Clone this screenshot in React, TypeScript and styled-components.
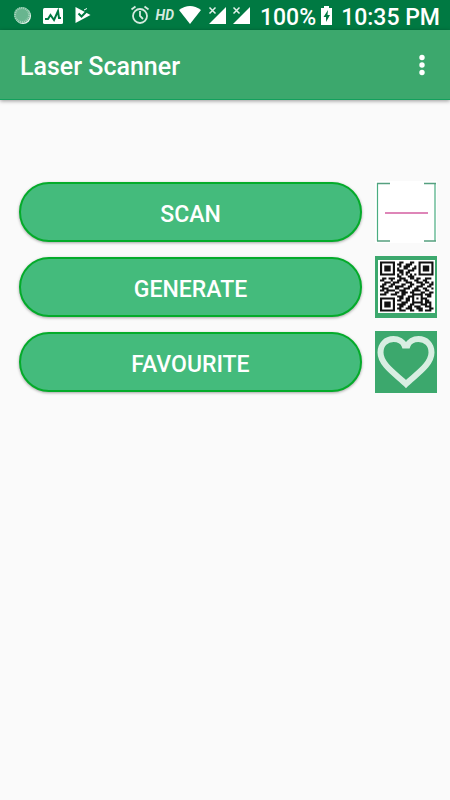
import React from "react";
import styled, { createGlobalStyle } from "styled-components";

const GlobalStyle = createGlobalStyle`
  *, *::before, *::after { box-sizing: border-box; }
  body {
    margin: 0;
    background: #fafafa;
    font-family: Roboto, "Liberation Sans", sans-serif;
    color: #ffffff;
  }
`;

const Screen = styled.div`
  display: flex;
  flex-direction: column;
  min-height: 100vh;
`;

const StatusBar = styled.div`
  display: flex;
  align-items: center;
  justify-content: space-between;
  height: 30px;
  padding: 0 10px 0 12px;
  background: #007942;
`;

const StatusGroup = styled.div<{ $gap: number }>`
  display: flex;
  align-items: center;
  gap: ${(p) => p.$gap}px;
`;

const StatusText = styled.span`
  font-size: 23px;
  line-height: 24px;
  font-weight: 500;
  padding-top: 5px;
  white-space: nowrap;
`;

const Reading = styled(StatusText)`
  margin-left: 4px;
`;

const HdMark = styled.span`
  font-size: 14px;
  line-height: 20px;
  font-weight: 700;
  font-style: italic;
  color: #d5eadf;
`;

const StatusIcon = styled.svg`
  display: block;
  flex: none;
`;

const AppBar = styled.header`
  display: flex;
  align-items: center;
  justify-content: space-between;
  height: 70px;
  padding: 0 16px 0 20px;
  background: #3ca86d;
  border-bottom: 1px solid #12a05c;
  box-shadow: 0 1px 4px rgba(0, 0, 0, 0.4);
`;

const Title = styled.h1`
  margin: 0;
  padding-top: 4px;
  font-size: 25px;
  line-height: 32px;
  font-weight: 500;
`;

const MenuButton = styled.button`
  display: flex;
  align-items: center;
  justify-content: center;
  width: 24px;
  height: 40px;
  padding: 0;
  border: 0;
  background: none;
  color: inherit;
  cursor: pointer;
`;

const Actions = styled.main`
  display: flex;
  flex-direction: column;
  gap: 13px;
  padding: 81px 13px 24px 19px;
`;

const ActionRow = styled.div`
  display: flex;
  align-items: center;
  gap: 13px;
`;

const ActionButton = styled.button`
  flex: 1;
  height: 60px;
  padding: 5px 0 0;
  border: 2px solid #04ab2a;
  border-radius: 30px;
  background: #44bb7c;
  box-shadow: 0 1px 3px rgba(0, 0, 0, 0.35);
  color: #ffffff;
  font-family: inherit;
  font-size: 23px;
  line-height: 28px;
  font-weight: 500;
  text-transform: uppercase;
  cursor: pointer;
`;

const Picture = styled.svg`
  display: block;
  flex: none;
  width: 62px;
  height: 62px;
`;

const QR_ROWS = [
  "1111111001100011001111111",
  "1000001011001110001000001",
  "1011101001011100101011101",
  "1011101010011001101011101",
  "1011101011100111001011101",
  "1000001001101100001000001",
  "1111111010101010101111111",
  "0000000011000111000000000",
  "0110111001110011011001110",
  "1100010011011000110011000",
  "0011101110001110011101101",
  "0110011000110011000110011",
  "1100110111100110011100110",
  "0111000110011100110011001",
  "1101111001110001111001100",
  "0011000110111011000110011",
  "1110011100110001111101110",
  "0000000011100111000100110",
  "1111111001101101010111000",
  "1000001011001101000101100",
  "1011101000111001111101110",
  "1011101011110011000111010",
  "1011101001100110111001110",
  "1000001011001110011100011",
  "1111111001110011001101110",
];

function qrPath() {
  let d = "";
  QR_ROWS.forEach((row, y) => {
    for (const run of row.matchAll(/1+/g)) {
      d += `M${run.index} ${y}h${run[0].length}v1h-${run[0].length}z`;
    }
  });
  return d;
}

function ScanPicture() {
  return (
    <Picture viewBox="0 0 62 62" aria-hidden="true">
      <rect width="62" height="62" fill="#ffffff" />
      <path d="M2.5 2v58M60 2v58" fill="none" stroke="#49ac80" strokeWidth="1.2" />
      <path d="M2 2.5h13M49 2.5h12M2 60h13M49 60h12" fill="none" stroke="#55a07f" strokeWidth="1.6" />
      <path d="M10 32h43" stroke="#de86b8" strokeWidth="2" />
    </Picture>
  );
}

function QrPicture() {
  return (
    <Picture viewBox="0 0 62 62" aria-hidden="true">
      <rect width="62" height="62" fill="#3ca86d" />
      <rect x="3" y="4" width="57" height="53" fill="#ffffff" />
      <path d={qrPath()} fill="#111111" transform="translate(5 5.5) scale(2.14 2)" />
    </Picture>
  );
}

function HeartPicture() {
  return (
    <Picture viewBox="0 0 62 62" aria-hidden="true">
      <rect width="62" height="62" fill="#3ca86d" />
      <path
        d="M31 53C22 44 5.5 34 5.5 21.5C5.5 13.5 11 8 18.5 8C23.5 8 28 10.500 29.5 14.5H32.5C34 10.5 38.5 8 43.5 8C51 8 56.5 13.5 56.5 21.5C56.5 34 40 44 31 53Z"
        fill="none"
        stroke="#d8eee2"
        strokeWidth="6"
      />
    </Picture>
  );
}

const ACTIONS = [
  { label: "Scan", Art: ScanPicture },
  { label: "Generate", Art: QrPicture },
  { label: "Favourite", Art: HeartPicture },
];

function Signal() {
  return (
    <StatusIcon width="19" height="19" viewBox="0 0 19 19" aria-hidden="true">
      <path d="M18 1v17H1z" fill="#ffffff" />
      <path d="M0 0h9v9H0z" fill="#007942" />
      <path d="M1.5 1.5l6 6M7.5 1.5l-6 6" stroke="#e4f2eb" strokeWidth="1.5" />
    </StatusIcon>
  );
}

export default function App() {
  return (
    <Screen>
      <GlobalStyle />
      <StatusBar>
        <StatusGroup $gap={11}>
          <StatusIcon width="20" height="20" viewBox="0 0 20 20" aria-hidden="true">
            <circle cx="11" cy="11" r="8" fill="#e8f4ee" />
            <circle cx="10" cy="10" r="8" fill="#68b58f" />
            <circle cx="10" cy="10" r="7" fill="none" stroke="#a5d3bb" strokeWidth="2" strokeDasharray="1 1" />
          </StatusIcon>
          <StatusIcon width="20" height="17" viewBox="0 0 20 17" aria-hidden="true">
            <rect y="1" width="20" height="16" rx="1.5" fill="#ffffff" />
            <path d="M2 12h3l2.5-4 3.5 5 4-9 1 7h2" fill="none" stroke="#007942" strokeWidth="2" />
          </StatusIcon>
          <StatusIcon width="18" height="18" viewBox="0 0 18 18" aria-hidden="true">
            <path d="M1.5 1l15 8-15 8z" fill="#ffffff" />
            <path d="M4.5 7.5l3 3L14 4" fill="none" stroke="#007942" strokeWidth="2" />
            <path d="M10 4l3-1.5" fill="none" stroke="#ffffff" strokeWidth="1" />
          </StatusIcon>
        </StatusGroup>
        <StatusGroup $gap={5}>
          <StatusIcon width="21" height="20" viewBox="0 0 21 20" fill="none" stroke="#d5eadf" strokeWidth="1.8" aria-hidden="true">
            <circle cx="10" cy="11" r="7" />
            <path d="M10 6v5l3 3M1.5 4.5l4-3M18.5 4.5l-4-3" />
          </StatusIcon>
          <HdMark>HD</HdMark>
          <StatusIcon width="24" height="18" viewBox="0 0 24 18" aria-hidden="true">
            <path d="M0 4Q11-4 22 4L11 18z" fill="#ffffff" />
          </StatusIcon>
          <Signal />
          <Signal />
          <Reading>100%</Reading>
          <StatusIcon width="11" height="20" viewBox="0 0 11 20" aria-hidden="true">
            <path d="M3 1h5v2h3v17H0V3h3z" fill="#ffffff" />
            <path d="M7 5L2.5 12H5V17l4-7H6.5z" fill="#007942" />
          </StatusIcon>
          <Reading>10:35 PM</Reading>
        </StatusGroup>
      </StatusBar>
      <AppBar>
        <Title>Laser Scanner</Title>
        <MenuButton type="button" aria-label="More options">
          <svg width="6" height="22" viewBox="0 0 6 22" fill="#ffffff" aria-hidden="true">
            <circle cx="3" cy="3.5" r="2.7" />
            <circle cx="3" cy="11" r="2.7" />
            <circle cx="3" cy="18.5" r="2.7" />
          </svg>
        </MenuButton>
      </AppBar>
      <Actions>
        {ACTIONS.map(({ label, Art }) => (
          <ActionRow key={label}>
            <ActionButton type="button">{label}</ActionButton>
            <Art />
          </ActionRow>
        ))}
      </Actions>
    </Screen>
  );
}
